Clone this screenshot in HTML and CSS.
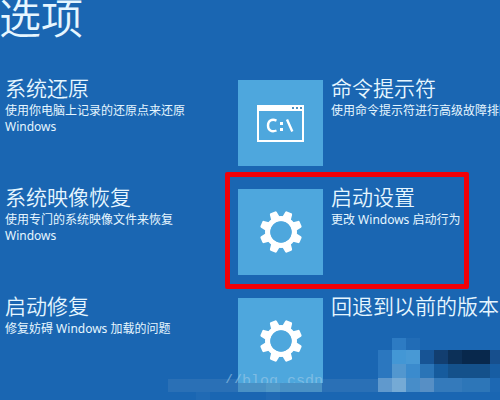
FILE: index.html
```html
<!DOCTYPE html>
<html lang="zh-CN">
<head>
<meta charset="utf-8">
<title>选项</title>
<link rel="stylesheet" href="styles.css">
</head>
<body>
<svg class="defs" aria-hidden="true">
  <symbol id="gear" viewBox="-22 -22 44 44">
    <g fill="#fff">
      <g id="teeth">
        <path id="tooth" transform="rotate(22.5)" d="M-4.6-14L-3.7-20Q-3.5-21.2-2.4-21.2H2.4Q3.5-21.2 3.7-20L4.6-14Z"/>
        <use href="#tooth" transform="rotate(45)"/>
        <use href="#tooth" transform="rotate(90)"/>
        <use href="#tooth" transform="rotate(135)"/>
      </g>
      <use href="#teeth" transform="rotate(180)"/>
    </g>
    <circle r="13.3" fill="none" stroke="#fff" stroke-width="5.4"/>
    <circle r="10.7" fill="#4ea7dd"/>
  </symbol>
</svg>
<main class="screen">
  <h1 class="title">选项</h1>
  <div class="options">
    <a class="option" href="#">
      <span class="text"><span class="name">系统还原</span><span class="desc">使用你电脑上记录的还原点来还原 Windows</span></span>
    </a>
    <a class="option" href="#">
      <span class="tile">
        <svg width="47" height="37" viewBox="0 0 47 37" aria-hidden="true">
          <path fill="#fff" fill-rule="evenodd" d="M0 0H47V37H0ZM2 6V35H45V6Z"/>
          <path fill="#4c8fc0" d="M35 2h2v2h-2zM39 2h2v2h-2zM43 2h2v2h-2z"/>
          <path fill="none" stroke="#fff" stroke-width="2.4" d="M19.500 15.600C14.500 13.500 11 16 11 20.500C11 25.200 14.500 27.500 19.500 25.500M30 14.500L35.300 26.500"/>
          <path fill="#fff" d="M23 17h3v3h-3zM23 23h3v3h-3z"/>
        </svg>
      </span>
      <span class="text"><span class="name">命令提示符</span><span class="desc nowrap">使用命令提示符进行高级故障排除</span></span>
    </a>
    <a class="option" href="#">
      <span class="text"><span class="name">系统映像恢复</span><span class="desc">使用专门的系统映像文件来恢复 Windows</span></span>
    </a>
    <a class="option marked" href="#">
      <span class="tile"><svg width="44" height="44" aria-hidden="true"><use href="#gear"/></svg></span>
      <span class="text"><span class="name">启动设置</span><span class="desc">更改 Windows 启动行为</span></span>
    </a>
    <a class="option" href="#">
      <span class="text"><span class="name">启动修复</span><span class="desc">修复妨碍 Windows 加载的问题</span></span>
    </a>
    <a class="option" href="#">
      <span class="tile"><svg width="44" height="44" aria-hidden="true"><use href="#gear"/></svg></span>
      <span class="text"><span class="name">回退到以前的版本</span></span>
    </a>
  </div>
  <svg class="mosaic" width="332" height="62" viewBox="0 0 332 62" shape-rendering="crispEdges" aria-hidden="true">
    <path fill="#2a70b6" d="M0 41h210v13H0z"/>
    <path fill="#4991c5" d="M70 45h84v9H70z"/>
    <path fill="#5199c8" d="M98 45h14v9H98z"/>
    <path fill="#4ea7dd" d="M70 40h85v5H70z"/>
    <path fill="#206ab4" d="M28 54h14v8H28zM98 54h14v8H98z"/>
    <path fill="#2d7bc3" d="M224 0h14v12h-14z"/>
    <path fill="#216cb6" d="M238 0h14v12h-14z"/>
    <path fill="#2b77bf" d="M210 12h14v28h-14z"/>
    <path fill="#4397d5" d="M224 12h14v14h-14z"/>
    <path fill="#4899d5" d="M238 12h14v14h-14z"/>
    <path fill="#175495" d="M252 12h14v14h-14z"/>
    <path fill="#123e70" d="M266 12h14v14h-14z"/>
    <path fill="#0c3058" d="M280 12h14v14h-14z"/>
    <path fill="#08284c" d="M294 12h28v14h-28z"/>
    <path fill="#174f8d" d="M322 12h10v14h-10z"/>
    <path fill="#5297cf" d="M224 26h14v14h-14z"/>
    <path fill="#3b8bcd" d="M238 26h14v14h-14z"/>
    <path fill="#2a74b7" d="M252 26h14v14h-14z"/>
    <path fill="#165b9d" d="M266 26h14v14h-14z"/>
    <path fill="#14518b" d="M280 26h42v14h-42z"/>
    <path fill="#175da3" d="M322 26h10v14h-10z"/>
    <path fill="#6099cd" d="M210 40h14v14h-14z"/>
    <path fill="#75aad5" d="M224 40h14v14h-14z"/>
    <path fill="#478dc9" d="M238 40h14v14h-14z"/>
    <path fill="#578fc5" d="M252 40h14v14h-14z"/>
    <path fill="#347abb" d="M266 40h28v14h-28z"/>
    <path fill="#2d76b8" d="M294 40h28v14h-28z"/>
    <path fill="#1d68b3" d="M322 40h10v14h-10z"/>
  </svg>
  <div class="watermark" aria-hidden="true">//blog.csdn</div>
</main>
</body>
</html>
```
FILE: styles.css
```css
*,
*::after {
  box-sizing: border-box;
}

body {
  margin: 0;
  background: #1a66b2;
  color: #e6f6ff;
  font-family: "Noto Sans", "Noto Sans CJK SC", sans-serif;
}

.defs {
  position: absolute;
  width: 0;
  height: 0;
}

.screen {
  position: relative;
  min-height: 100vh;
  overflow: hidden;
}

.title {
  margin: -6px 0 0 -1px;
  font-family: "Noto Sans CJK SC", sans-serif;
  font-size: 42px;
  font-weight: 350;
  line-height: 44px;
}

.options {
  display: grid;
  grid-template-columns: 233px minmax(0, 1fr);
  row-gap: 23px;
  margin-top: 42px;
  padding-left: 5px;
}

.option {
  position: relative;
  display: flex;
  gap: 8px;
  min-height: 86px;
  color: inherit;
  text-decoration: none;
}

.tile {
  display: flex;
  flex: none;
  align-items: center;
  justify-content: center;
  width: 85px;
  height: 86px;
  background: #4ea7dd;
}

.text {
  display: flex;
  flex-direction: column;
  max-width: 190px;
}

.name {
  font-family: "Noto Sans CJK SC", sans-serif;
  font-size: 21px;
  font-weight: 350;
  line-height: 22px;
  margin-top: -4px;
  white-space: nowrap;
}

.desc {
  margin-top: 5px;
  font-size: 12px;
  line-height: 16px;
}

.nowrap {
  white-space: nowrap;
}

.marked::after {
  content: "";
  position: absolute;
  top: -17px;
  left: -13px;
  width: 244px;
  height: 117px;
  border: 5px solid #f00008;
  border-radius: 2px;
}

.watermark {
  position: absolute;
  top: 374px;
  left: 224px;
  height: 9px;
  overflow: hidden;
  color: #9fcbe8;
  font-family: "Liberation Mono", monospace;
  font-size: 15px;
  line-height: 16px;
  opacity: .6;
}

.mosaic {
  position: absolute;
  top: 338px;
  left: 168px;
}
```
